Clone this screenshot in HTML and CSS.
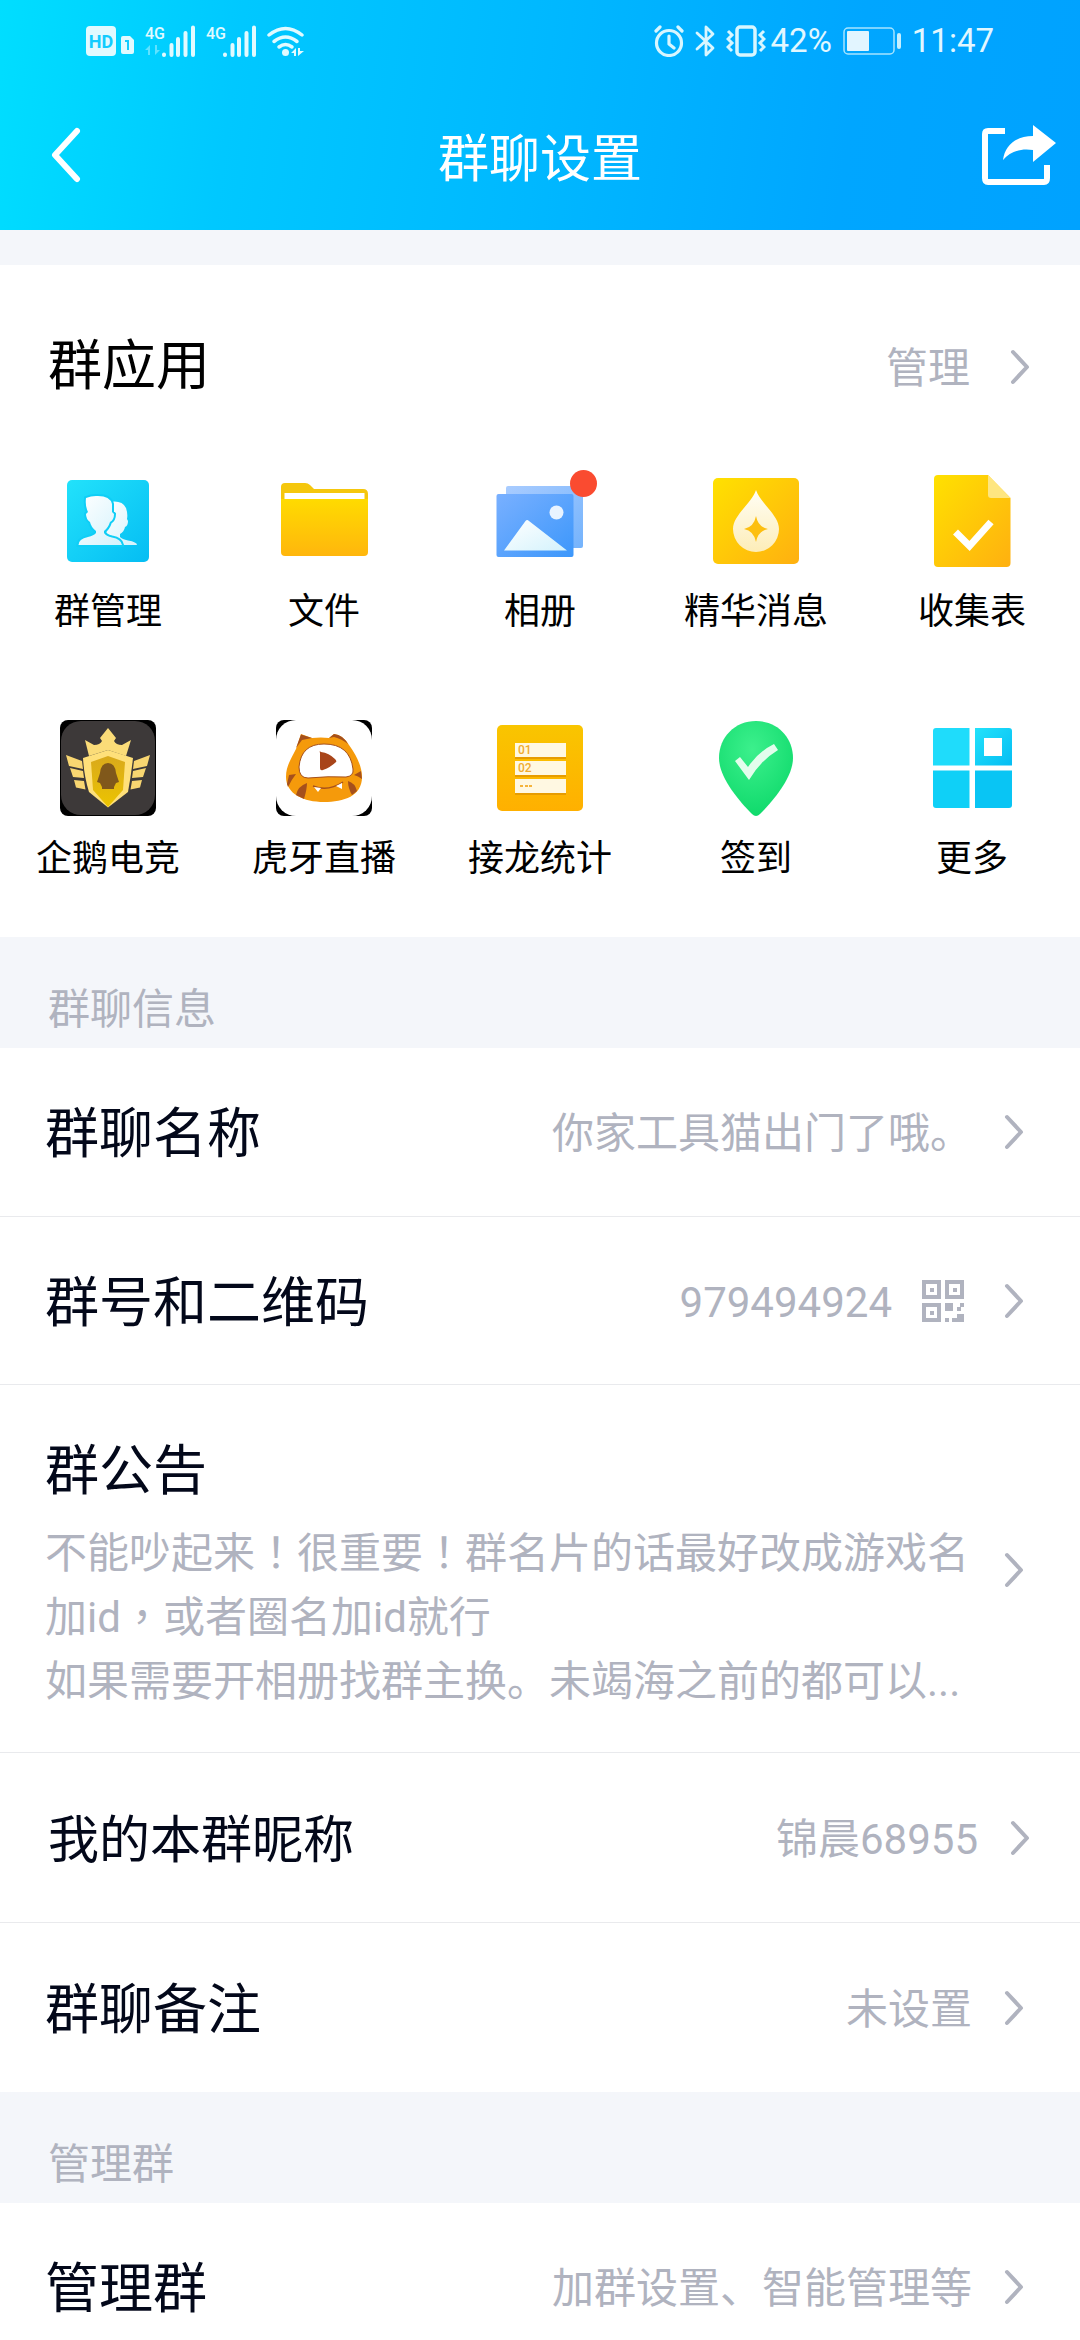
FILE: index.html
```html
<!DOCTYPE html>
<html lang="zh-CN">
<head>
<meta charset="utf-8">
<meta name="viewport" content="width=device-width, initial-scale=1">
<title>群聊设置</title>
<link rel="stylesheet" href="styles.css">
</head>
<body>
<svg class="defs" width="0" height="0" aria-hidden="true">
  <defs>
    <linearGradient id="cyan" x1="0" y1="0" x2="1" y2="1"><stop offset="0" stop-color="#22e2fb"/><stop offset="1" stop-color="#05bdf3"/></linearGradient>
    <linearGradient id="yellow" x1="0" y1="0" x2="1" y2="1"><stop offset="0" stop-color="#ffe100"/><stop offset="1" stop-color="#ffb010"/></linearGradient>
    <linearGradient id="folder" x1="0" y1="0" x2="0" y2="1"><stop offset="0" stop-color="#ffdb00"/><stop offset="1" stop-color="#ffb60d"/></linearGradient>
    <linearGradient id="amber" x1="0" y1="0" x2="0" y2="1"><stop offset="0" stop-color="#f9c500"/><stop offset="1" stop-color="#ffb000"/></linearGradient>
    <linearGradient id="blue" x1="0" y1="0" x2="1" y2="1"><stop offset="0" stop-color="#79b0ff"/><stop offset="1" stop-color="#3c97fb"/></linearGradient>
    <linearGradient id="paleblue" x1="0" y1="0" x2="1" y2="1"><stop offset="0" stop-color="#a9ccff"/><stop offset="1" stop-color="#74b3fc"/></linearGradient>
    <linearGradient id="frost" x1="0" y1="0" x2="1" y2="1"><stop offset="0" stop-color="#fff"/><stop offset="1" stop-color="#d3f2fc"/></linearGradient>
    <linearGradient id="cream" x1="0" y1="0" x2="0" y2="1"><stop offset="0" stop-color="#fffef5"/><stop offset="1" stop-color="#fdedb8"/></linearGradient>
    <radialGradient id="green" cx=".45" cy=".3" r=".7"><stop offset="0" stop-color="#3cf08c"/><stop offset="1" stop-color="#10da6c"/></radialGradient>
    <linearGradient id="shield" x1="0" y1="0" x2="0" y2="1"><stop offset="0" stop-color="#d9a91c"/><stop offset="1" stop-color="#ecc400"/></linearGradient>
    <symbol id="chevron" viewBox="0 0 20 36"><path d="M3 3 17 18 3 33" fill="none" stroke="#b0b3bf" stroke-width="4" stroke-linecap="round" stroke-linejoin="round"/></symbol>
    <symbol id="bars" viewBox="0 0 34 32"><path d="M2 29.500v.5M9.500 20v10M16 14v16M23.500 8v22M31 2.500v27.500" fill="none" stroke="#e1faff" stroke-width="4" stroke-linecap="round"/></symbol>
  </defs>
</svg>
<div class="screen">
  <header class="top">
    <div class="status">
      <div class="status-group">
        <svg width="49" height="32" viewBox="0 0 49 32" role="img" aria-label="HD 1">
          <rect x="0" y="1" width="30" height="30" rx="4" fill="#e1faff"/>
          <text x="15" y="23" class="hd-text">HD</text>
          <path d="M35 13q0-2 2-2h7l4 4v12q0 2-2 2h-9q-2 0-2-2z" fill="#e1faff"/>
          <path d="M39 16h3v9" fill="none" stroke="#12ccff" stroke-width="2"/>
        </svg>
        <svg width="51" height="32" viewBox="0 0 51 32" role="img" aria-label="4G">
          <text x="0" y="14" class="net-text">4G</text>
          <path d="M5 20v10H3v-5H0zM10 30V20h2v5h3z" fill="#5fe2ff"/>
          <use href="#bars" x="17" y="0" width="34" height="32"/>
        </svg>
        <svg width="51" height="32" viewBox="0 0 51 32" role="img" aria-label="4G">
          <text x="0" y="14" class="net-text">4G</text>
          <use href="#bars" x="17" y="0" width="34" height="32"/>
        </svg>
        <svg width="38" height="32" viewBox="0 0 38 32" role="img" aria-label="Wi-Fi">
          <g fill="none" stroke="#e1faff" stroke-width="3.500" stroke-linecap="round"><path d="M2 10q16.500-13 33 0"/><path d="M7 16.500q11.500-9 23 0"/><path d="M12 22q6.500-5 13 0"/></g>
          <circle cx="18.500" cy="27.500" r="3.500" fill="#e1faff"/>
          <path d="M29 23v8h-2v-3h-3zM31 31v-8h2v3h4z" fill="#e1faff"/>
        </svg>
      </div>
      <div class="status-group status-right">
        <svg width="30" height="32" viewBox="0 0 30 32" role="img" aria-label="闹钟">
          <g fill="none" stroke="#d8f6ff" stroke-width="3.200" stroke-linecap="round" stroke-linejoin="round"><circle cx="15" cy="18" r="12.500"/><path d="M15 11v8l5 4M2 6l4-4M28 6l-4-4"/></g>
        </svg>
        <svg width="20" height="32" viewBox="0 0 20 32" role="img" aria-label="蓝牙">
          <path d="M2 8l16 15-7 7V2l7 7L2 24" fill="none" stroke="#d8f6ff" stroke-width="2.800" stroke-linecap="round" stroke-linejoin="round"/>
        </svg>
        <span class="vibrate">
          <svg width="40" height="32" viewBox="0 0 40 32" role="img" aria-label="振动">
            <rect x="11" y="2" width="18" height="28" rx="3" fill="none" stroke="#d8f6ff" stroke-width="3.500"/>
            <path d="M2 6l4 4-4 4 4 4-4 4 4 4M38 6l-4 4 4 4-4 4 4 4-4 4" fill="none" stroke="#d8f6ff" stroke-width="3"/>
          </svg>
          <span>42%</span>
        </span>
        <svg width="58" height="32" viewBox="0 0 58 32" role="img" aria-label="电量">
          <rect x="1" y="3" width="50" height="26" rx="4" fill="none" stroke="#a6e4ff" stroke-width="1.500"/>
          <rect x="4" y="6" width="22" height="20" rx="1" fill="#e2f5ff"/>
          <rect x="54" y="8" width="4" height="16" rx="2" fill="#c6efff"/>
        </svg>
        <span>11:47</span>
      </div>
    </div>
    <nav class="navbar">
      <button class="icon-button" type="button" aria-label="返回">
        <svg width="32" height="56" viewBox="0 0 32 56"><path d="M27 4 5 28l22 24" fill="none" stroke="#fff" stroke-width="6" stroke-linecap="round" stroke-linejoin="round"/></svg>
      </button>
      <h1 class="title">群聊设置</h1>
      <button class="icon-button share" type="button" aria-label="分享">
        <svg width="74" height="60" viewBox="0 0 74 60"><path d="M23 6H6q-3 0-3 3v44q0 4 3 4h56q3 0 3-4V40" fill="none" stroke="#fff" stroke-width="6"/><path d="M51 0 74 18 51 37V25C38 23 28 27 21 35 23 20 34 11 51 11z" fill="#fff"/></svg>
      </button>
    </nav>
  </header>

  <main class="content">
    <section class="apps">
      <div class="apps-head">
        <h2 class="apps-title">群应用</h2>
        <a class="manage" href="#manage"><span class="value">管理</span><svg class="chevron"><use href="#chevron"/></svg></a>
      </div>
      <ul class="app-grid">
        <li><a class="app" href="#admin">
          <svg class="app-icon" viewBox="0 0 96 96">
            <rect x="7" y="7" width="82" height="82" rx="5" fill="url(#cyan)"/>
            <path d="M50 29q12-2 16 6 2 6 1 11l1 2q0 5-3 6-1 5-5 7v3q2 2 8 3.500 9 1.500 9 4.500H45z" fill="url(#frost)"/>
            <path d="M26 25q6-2.500 12-2 12 0 14 8v8l2 2q0 6-4 8-2 6-6 9v2q2 3 8 4.500 9 1.500 10 7.500H18.500q0-6 9.500-8 6-1.500 8-4v-2q-5-4-6-9-4-3-4-8l2-2q-3-6-2-14z" fill="none" stroke="#0fcef6" stroke-width="4"/>
            <path d="M26 25q6-2.500 12-2 12 0 14 8v8l2 2q0 6-4 8-2 6-6 9v2q2 3 8 4.500 9 1.500 10 7.500H18.500q0-6 9.500-8 6-1.500 8-4v-2q-5-4-6-9-4-3-4-8l2-2q-3-6-2-14z" fill="url(#frost)"/>
          </svg><span>群管理</span></a></li>
        <li><a class="app" href="#files">
          <svg class="app-icon" viewBox="0 0 96 96">
            <path d="M5 14q0-4 4-4h20q3 0 5 2l4 4h49q5 0 5 5v15H5z" fill="#f5c70d"/>
            <path d="M8.500 20h80v8h-80z" fill="#fff"/>
            <path d="M5 26h87v53q0 4-4 4H9q-4 0-4-4z" fill="url(#folder)"/>
          </svg><span>文件</span></a></li>
        <li><a class="app" href="#album">
          <svg class="app-icon" viewBox="0 0 96 96">
            <rect x="14" y="13" width="77" height="62" rx="2" fill="url(#paleblue)"/>
            <rect x="4.500" y="21" width="77" height="63" rx="2" fill="url(#blue)"/>
            <path d="M12 77.500 33.500 48q1.500-2 3.500 0l38 29.500z" fill="url(#frost)"/>
            <circle cx="64.500" cy="39.500" r="7" fill="#e8f3ff"/>
          </svg><i class="badge"></i><span>相册</span></a></li>
        <li><a class="app" href="#digest">
          <svg class="app-icon" viewBox="0 0 96 96">
            <rect x="5" y="5" width="86" height="86" rx="5" fill="url(#yellow)"/>
            <path d="M48 17C52 30 71 42 71 56a23 23 0 0 1-46 0C25 42 44 30 48 17z" fill="url(#cream)"/>
            <path d="M48 43q2 11 12 13-10 2-12 13-2-11-12-13 10-2 12-13z" fill="#fdbf10"/>
          </svg><span>精华消息</span></a></li>
        <li><a class="app" href="#forms">
          <svg class="app-icon" viewBox="0 0 96 96">
            <path d="M14 2h50l22.500 23v65q0 4-4 4H14q-4 0-4-4V6q0-4 4-4z" fill="url(#yellow)"/>
            <path d="M64 2v20q0 3 3 3h19.500z" fill="#fee680"/>
            <path d="M31.500 59 45.500 73 67 49" fill="none" stroke="#fff" stroke-width="7"/>
          </svg><span>收集表</span></a></li>
        <li><a class="app" href="#egame">
          <svg class="app-icon" viewBox="0 0 96 96">
            <rect width="96" height="96" rx="8"/>
            <rect x="1" y="1" width="94" height="94" rx="20" fill="#3d3939"/>
            <path d="m25 20 9 5q6 0 8-4l-2-3 8-10 8 10-2 3q2 4 8 4l9-5-5 16-18-6-19 6z" fill="#fbdc78"/>
            <path d="M23 38 48 30l25 8q-2 18-5 34L48 87.500 29 72q-5-16-6-34z" fill="#ffe07a"/>
            <path d="M31 42 48 36l17 6-2 28-15 17-15-17z" fill="url(#shield)"/>
            <path d="M48 43q7 0 8 10l3 9-3 1-2 4v2H42v-2l-2-4-3-1 3-9q1-10 8-10z" fill="#80581b"/>
            <g id="wing" fill="#f8d671"><path d="m6 35 16 6 1 8-14-3zM10 48l13 3 1 7-11-1zM14 60l10 1 1.500 8.500-9.500-2z"/></g>
            <use href="#wing" transform="translate(96 0) scale(-1 1)"/>
          </svg><span>企鹅电竞</span></a></li>
        <li><a class="app" href="#huya">
          <svg class="app-icon" viewBox="0 0 96 96">
            <rect width="96" height="96" rx="8"/>
            <rect width="96" height="96" rx="20" ry="20" fill="#fff"/>
            <path d="M0 20h96v56H0zM20 0h56v96H20z" fill="#fff"/>
            <path d="M20 29 25 14l11 4q9-1 17 0l5-4q9 1 15 11 13 18 13 32C86 76 68 82 48 82 28 82 10 74 10 57 10 46 15 39 20 29z" fill="#f59a0b"/>
            <path d="m20 28 5-13.500 11 3.500-10 2zM53 18l5-4q9 1 14 10-6-5-14-7z" fill="#a5501c"/>
            <path d="M23 47Q25 24 48 24q26 0 29 25 1 7-7 8-17-1-38 1-9 0-9-11z" fill="#fff" stroke="#a5501c" stroke-width="1"/>
            <path d="M45 32q-2-2-1 1v15q0 3 3 2 8-3 13-8 1-1-1-3-6-6-14-7z" fill="#a8451a"/>
            <path d="m11 64 2-9 7-1q-4 5-8 13zM20 75q2-9 11-12 0 6-3 16zM85 51l-7 4q4 1 8 4zM81 71q-2-8-9-10 0 7 4 14z" fill="#a5501c"/>
            <path d="M37 66q15 6 30-4" fill="none" stroke="#a5501c" stroke-width="1.500"/>
            <path d="m38 67 7 1-3 4zM60 66l6-3v6z" fill="#fff"/>
          </svg><span>虎牙直播</span></a></li>
        <li><a class="app" href="#chain">
          <svg class="app-icon" viewBox="0 0 96 96">
            <rect x="5" y="5" width="86" height="86" rx="5" fill="url(#amber)"/>
            <path d="M23 24h51v15H23zM23 42h51v15H23zM23 60h51v15H23z" fill="#e79c00"/>
            <path d="M23 23h51v14H23zM23 41h51v14H23zM23 59h51v14H23z" fill="#fff8e2"/>
            <text x="26" y="34" class="list-num">01</text><text x="26" y="52" class="list-num">02</text>
            <path d="M28 65h3v2h-3zM33 65h3v2h-3zM37 65h3v2h-3z" fill="#f5b43c"/>
          </svg><span>接龙统计</span></a></li>
        <li><a class="app" href="#checkin">
          <svg class="app-icon" viewBox="0 0 96 96">
            <path d="M48 1c21 0 37 16 37 37 0 19-19 42-33 56q-4 4-8 0C30 80 11 57 11 38 11 17 27 1 48 1z" fill="url(#green)"/>
            <path d="m27 41 5-4 8 10q10-15 26-23l4 6Q52 41 41 60z" fill="#e2fdec"/>
          </svg><span>签到</span></a></li>
        <li><a class="app" href="#more">
          <svg class="app-icon" viewBox="0 0 96 96">
            <path d="M12 8h33.500v37.500H9V11q0-3 3-3z" fill="#1fdcfb"/>
            <path d="M51 8h34q3 0 3 3v34.500H51z" fill="url(#cyan)"/>
            <path d="M9 50.500h36.500V88H12q-3 0-3-3z" fill="#0fd0f7"/>
            <path d="M51 50.500h37V85q0 3-3 3H51z" fill="#09c5f4"/>
            <path d="M60 18h18v18H60z" fill="#fff"/>
          </svg><span>更多</span></a></li>
      </ul>
    </section>

    <h2 class="section-label">群聊信息</h2>
    <ul class="rows">
      <li><a class="row" href="#name"><span class="label">群聊名称</span><span class="value">你家工具猫出门了哦。</span><svg class="chevron"><use href="#chevron"/></svg></a></li>
      <li><a class="row" href="#qrcode"><span class="label">群号和二维码</span><span class="value code">979494924</span>
        <svg class="qr" viewBox="0 0 42 42" role="img" aria-label="二维码"><path fill="#b0b3bf" fill-rule="evenodd" d="M0 0h19v19H0zM4 4v11h11V4zM8 8h4v4H8zM23 0h19v19H23zM27 4v11h11V4zM31 8h4v4h-4zM0 23h19v19H0zM4 27v11h11V27zM8 31h4v4H8zM23 23h8v8h-8zM38 23h4v4h-4zM35 27h4v4h-4zM23 38h4v4h-4zM35 34h7v8H30v-4h5z"/></svg><svg class="chevron"><use href="#chevron"/></svg></a></li>
      <li><a class="row notice" href="#notice"><span class="notice-body"><span class="label">群公告</span><span class="notice-text">不能吵起来<span lang="zh-TW">！</span>很重要<span lang="zh-TW">！</span>群名片的话最好改成游戏名加id<span lang="zh-TW">，</span>或者圈名加id就行<br>如果需要开相册找群主换。未竭海之前的都可以...</span></span><svg class="chevron"><use href="#chevron"/></svg></a></li>
      <li><a class="row compact" href="#nickname"><span class="label">我的本群昵称</span><span class="value">锦晨68955</span><svg class="chevron"><use href="#chevron"/></svg></a></li>
      <li><a class="row tall" href="#remark"><span class="label">群聊备注</span><span class="value">未设置</span><svg class="chevron"><use href="#chevron"/></svg></a></li>
    </ul>

    <h2 class="section-label">管理群</h2>
    <ul class="rows">
      <li><a class="row" href="#group-admin"><span class="label">管理群</span><span class="value">加群设置、智能管理等</span><svg class="chevron"><use href="#chevron"/></svg></a></li>
    </ul>
  </main>
</div>
</body>
</html>
```

FILE: styles.css
```css
* {
  box-sizing: border-box;
}

body {
  margin: 0;
  background: #f4f6fa;
  color: #03081a;
  font-family: Roboto, "Noto Sans CJK SC", sans-serif;
}

h1,
h2,
ul {
  margin: 0;
  padding: 0;
  font-weight: 400;
  list-style: none;
}

a {
  color: inherit;
  text-decoration: none;
}

svg {
  display: block;
  flex: none;
}

.defs {
  position: absolute;
}

.screen {
  display: flex;
  flex-direction: column;
  height: 100vh;
}

/* Header */

.top {
  flex: none;
  background: linear-gradient(98deg, #00deff 0%, #00c8ff 22%, #00b8ff 50%, #00a6ff 78%, #00a2ff 100%);
  color: #fff;
}

.status {
  display: flex;
  align-items: center;
  justify-content: space-between;
  height: 80px;
  padding: 2px 86px 0;
  color: #e1f7ff;
  font-size: 33px;
  line-height: 40px;
}

.status-group {
  display: flex;
  align-items: center;
  gap: 10px;
}

.status-right {
  gap: 11px;
}

.vibrate {
  display: flex;
  align-items: center;
  gap: 5px;
}

.hd-text {
  fill: #12ccff;
  font: 700 18px Roboto, sans-serif;
  text-anchor: middle;
}

.net-text {
  fill: #e1faff;
  font: 500 16px Roboto, sans-serif;
}

.navbar {
  display: grid;
  grid-template-columns: 1fr auto 1fr;
  align-items: center;
  height: 150px;
  padding: 0 24px 0 50px;
}

.icon-button {
  justify-self: start;
  padding: 0;
  border: 0;
  background: none;
}

.share {
  justify-self: end;
}

.title {
  padding: 10px 26px 0 0;
  font-size: 51px;
  line-height: 64px;
}

/* Scrolling content */

.content {
  flex: 1;
  min-height: 0;
  padding-top: 35px;
  overflow-y: auto;
  scrollbar-width: none;
}

.chevron {
  width: 20px;
  height: 36px;
}

.value {
  padding-top: 4px;
  color: #b0b3bf;
  font-size: 42px;
  line-height: 64px;
}

/* Group apps */

.apps {
  padding: 62px 0 50px;
  background: #fff;
  color: #000;
}

.apps-head {
  display: flex;
  align-items: center;
  justify-content: space-between;
  padding: 0 50px 0 48px;
}

.apps-title {
  font-size: 54px;
  line-height: 80px;
}

.manage {
  display: flex;
  align-items: center;
  gap: 40px;
}

.app-grid {
  display: grid;
  grid-template-columns: repeat(5, 1fr);
  row-gap: 80px;
  padding-top: 66px;
}

.app {
  position: relative;
  display: flex;
  flex-direction: column;
  align-items: center;
  gap: 15px;
  font-size: 36px;
  line-height: 56px;
}

.app-icon {
  width: 96px;
  height: 96px;
}

.badge {
  position: absolute;
  top: -3px;
  left: calc(50% + 30px);
  width: 27px;
  height: 27px;
  border-radius: 50%;
  background: #fa4b30;
}

.list-num {
  fill: #f0ab30;
  font: 500 12px Roboto, sans-serif;
}

/* Setting rows */

.section-label {
  padding: 48px 48px 13px;
  color: #b0b3bf;
  font-size: 42px;
  line-height: 50px;
}

.rows li + li {
  border-top: 1px solid #e9eaed;
}

.row {
  display: flex;
  align-items: center;
  min-height: 168px;
  padding: 0 56px 0 45px;
  background: #fff;
}

.rows li + li .row {
  min-height: 167px;
}

.rows li + li .tall,
.rows li + li .compact {
  min-height: 169px;
}

.label {
  flex: 1;
  padding-top: 6px;
  font-size: 54px;
  line-height: 80px;
}

.row .value {
  margin-right: 32px;
}

.compact {
  padding: 0 50px 0 48px;
}

.compact .label {
  font-size: 51px;
}

.row .code {
  margin-right: 30px;
}

.qr {
  width: 42px;
  height: 42px;
  margin-right: 40px;
}

.notice {
  padding-top: 41px;
  padding-bottom: 38px;
}

.notice-body {
  display: flex;
  flex: 1;
  flex-direction: column;
  gap: 10px;
  margin-right: 26px;
}

.notice-text {
  color: #b0b3bf;
  font-size: 42px;
  line-height: 64px;
}
```
